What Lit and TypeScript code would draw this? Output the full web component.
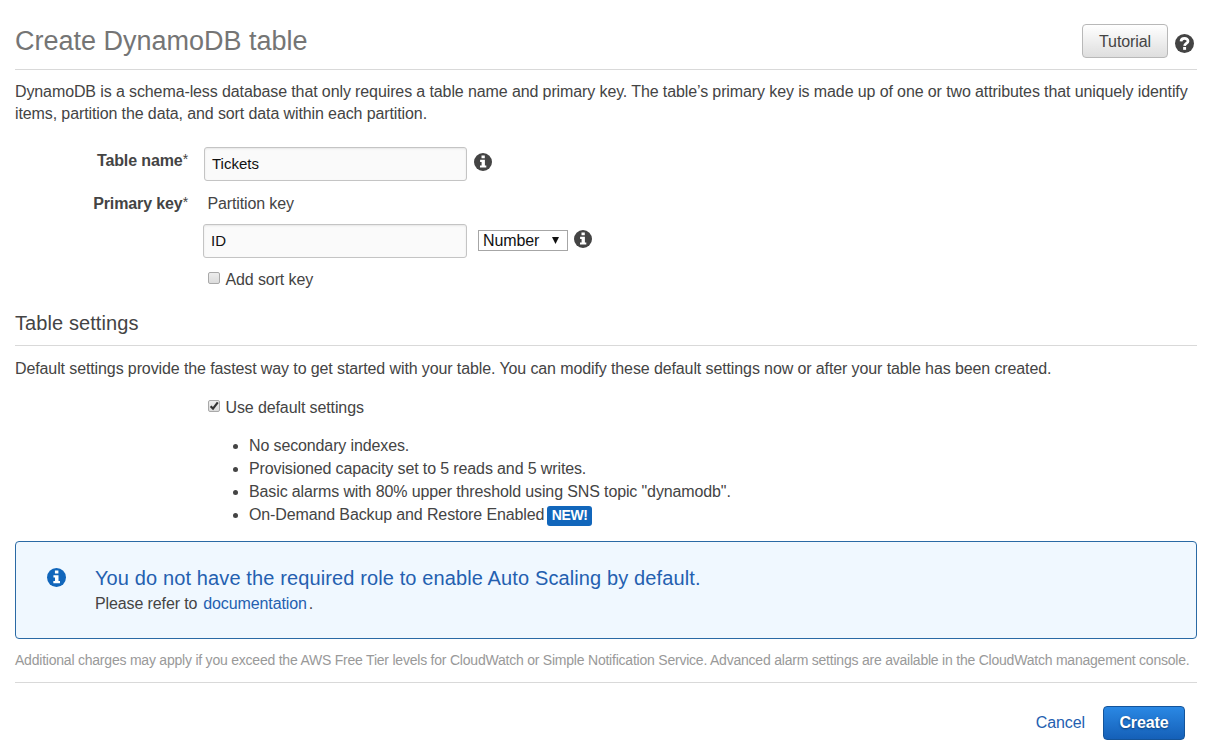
import { LitElement, html, css, svg } from "lit";
import { customElement, property } from "lit/decorators.js";

@customElement("glyph-icon")
class GlyphIcon extends LitElement {
  @property() kind = "info";
  static styles = css`
    :host { display: block; flex: none; width: 18px; height: 18px; }
    svg { display: block; width: 100%; height: 100%; }
    .mark { fill: #fff; }
    .stroke { fill: none; stroke: #fff; stroke-width: 2.6; }
  `;
  render() {
    const mark = this.kind === "help"
      ? svg`<path class="stroke" d="M5.7 7 C5.9 3.2 12.4 3.3 12.3 6.8 C12.3 9 9.2 8.8 9.1 11.2"/><rect class="mark" x="7.7" y="12.3" width="2.8" height="2.7"/>`
      : svg`<path class="mark" d="M7.5 2.4h3.3v2.8H7.5zM6.1 6.8h4.8v5.6h1.4v2.1H6v-2.1h1.6V8.9H6.1z"/>`;
    return html`<svg viewBox="0 0 18 18"><circle cx="9" cy="9" r="9" fill="currentColor"/>${mark}</svg>`;
  }
}

@customElement("check-field")
class CheckField extends LitElement {
  @property({ type: Boolean }) checked = false;
  static styles = css`
    :host { display: flex; line-height: 22px; }
    .box { box-sizing: border-box; flex: none; width: 12px; height: 12px; margin: 2.5px 5.5px 0 0; border: 1px solid #a9a9a9; border-radius: 2px; background: linear-gradient(#ededed, #dcdcdc); }
    svg { display: block; width: 10px; height: 10px; overflow: visible; }
    path { fill: none; stroke: #333; stroke-width: 2.2; }
  `;
  render() {
    return html`<span class="box">${this.checked ? html`<svg viewBox="0 0 10 10"><path d="M1.6 5.2 L4 7.6 L8.8 1.4"/></svg>` : ""}</span><span><slot></slot></span>`;
  }
}

@customElement("app-root")
class AppRoot extends LitElement {
  static styles = css`
    :host { display: block; box-sizing: border-box; height: 753px; padding: 0 13px 0 15px; overflow: hidden; background: #fff; color: #444; font: 16px/22px "Liberation Sans", Arial, sans-serif; letter-spacing: -0.11px; }
    * { box-sizing: border-box; }
    h1, h2, p, ul { margin: 0; font-weight: normal; white-space: nowrap; }
    .header { display: flex; align-items: flex-start; height: 70px; border-bottom: 1px solid #d9d9d9; }
    h1 { flex: 1; padding-top: 25px; font-size: 27px; line-height: 32px; letter-spacing: 0; color: #757575; }
    .btn { height: 34px; border: 1px solid #b8b8b8; border-radius: 4px; line-height: 32px; text-align: center; }
    .tutorial { width: 86px; margin-top: 24px; padding-top: 1px; background: linear-gradient(#fff, #dedede); }
    .header glyph-icon { width: 19px; height: 19px; margin: 34px 3px 0 7px; }
    .intro { padding-top: 11px; }
    .row { display: flex; align-items: flex-start; }
    .first { margin-top: 22px; height: 34px; }
    .label { width: 173px; text-align: right; font-weight: bold; line-height: 28px; }
    .label span { font-size: 14px; font-weight: normal; line-height: 0; vertical-align: 2px; }
    .field { height: 34px; padding: 0 7px; border: 1px solid #c4c4c4; border-radius: 3px; background: #fafafa; box-shadow: inset 0 1px 2px #e6e6e6; color: #111; font-size: 15px; line-height: 32px; letter-spacing: 0; }
    .name { width: 263px; margin-left: 16px; }
    .first glyph-icon { margin: 5.5px 0 0 7px; }
    .key { margin-top: 12px; height: 22px; }
    .key .label { line-height: 22px; }
    .key .caption { margin-left: 19.5px; letter-spacing: -0.13px; }
    .part { margin: 9px 0 0 188px; height: 34px; }
    .part .field { width: 264px; }
    .select { display: flex; justify-content: space-between; width: 90px; height: 21px; margin: 6px 0 0 11px; padding: 0 8px 0 4px; border: 1px solid #a6a6a6; color: #111; line-height: 20px; }
    .arrow { width: 7px; height: 7px; margin-top: 6px; background: #111; clip-path: polygon(0 0, 100% 0, 50% 100%); }
    .part glyph-icon { margin: 5.5px 0 0 6px; }
    .sort { margin: 11px 0 0 193px; }
    h2 { height: 55px; padding-top: 20px; border-bottom: 1px solid #d9d9d9; font-size: 20px; line-height: 24px; letter-spacing: 0.09px; }
    .desc { padding-top: 12px; }
    .defaults { margin: 17px 0 0 193px; }
    ul { margin-top: 15px; padding-left: 234px; line-height: 23px; letter-spacing: -0.125px; list-style: none; }
    li { display: flex; align-items: center; height: 23px; }
    li::before { content: ""; flex: none; width: 5px; height: 5px; margin: 2px 11px 0 -16px; border-radius: 50%; background: #444; }
    .new { width: 45px; height: 20px; margin: 2px 0 0 3px; border-radius: 3px; background: #1166bb; color: #fff; font-size: 14px; font-weight: bold; line-height: 19px; letter-spacing: -0.4px; text-align: center; }
    .notice { display: flex; height: 98px; margin-top: 15px; padding: 23px 0 0 31px; border: 1px solid #2a6aa5; border-radius: 4px; background: #f0f8ff; }
    .notice glyph-icon { width: 19px; height: 19px; margin: 3px 29px 0 0; color: #1166bb; }
    .title { font-size: 20px; line-height: 26px; letter-spacing: 0.12px; color: #2460b0; }
    .body { padding-top: 1px; line-height: 24px; }
    .link { color: #2460b0; }
    .body .link { margin: 0 2px 0 1.5px; }
    .fine { height: 44px; padding-top: 11px; border-bottom: 1px solid #d9d9d9; color: #999; font-size: 14px; line-height: 20px; letter-spacing: -0.22px; }
    .actions { display: flex; justify-content: flex-end; align-items: center; gap: 18px; padding: 23px 12px 0 0; }
    .create { width: 82px; border-color: #14549a; background: linear-gradient(#2a88e4, #1560b8); color: #fff; font-weight: bold; text-shadow: 0 1px 2px #0a3a70; }
  `;
  render() {
    return html`
      <div class="header"><h1>Create DynamoDB table</h1><div class="btn tutorial">Tutorial</div><glyph-icon kind="help"></glyph-icon></div>
      <p class="intro">DynamoDB is a schema-less database that only requires a table name and primary key. The table’s primary key is made up of one or two attributes that uniquely identify<br>items, partition the data, and sort data within each partition.</p>
      <div class="row first"><div class="label">Table name<span>*</span></div><div class="field name">Tickets</div><glyph-icon></glyph-icon></div>
      <div class="row key"><div class="label">Primary key<span>*</span></div><div class="caption">Partition key</div></div>
      <div class="row part"><div class="field">ID</div><div class="select">Number<span class="arrow"></span></div><glyph-icon></glyph-icon></div>
      <check-field class="sort">Add sort key</check-field>
      <h2>Table settings</h2>
      <p class="desc">Default settings provide the fastest way to get started with your table. You can modify these default settings now or after your table has been created.</p>
      <check-field class="defaults" checked>Use default settings</check-field>
      <ul>
        <li>No secondary indexes.</li>
        <li>Provisioned capacity set to 5 reads and 5 writes.</li>
        <li>Basic alarms with 80% upper threshold using SNS topic "dynamodb".</li>
        <li>On-Demand Backup and Restore Enabled<span class="new">NEW!</span></li>
      </ul>
      <div class="notice"><glyph-icon></glyph-icon><div><div class="title">You do not have the required role to enable Auto Scaling by default.</div><div class="body">Please refer to <span class="link">documentation</span>.</div></div></div>
      <p class="fine">Additional charges may apply if you exceed the AWS Free Tier levels for CloudWatch or Simple Notification Service. Advanced alarm settings are available in the CloudWatch management console.</p>
      <div class="actions"><span class="link">Cancel</span><div class="btn create">Create</div></div>
    `;
  }
}
